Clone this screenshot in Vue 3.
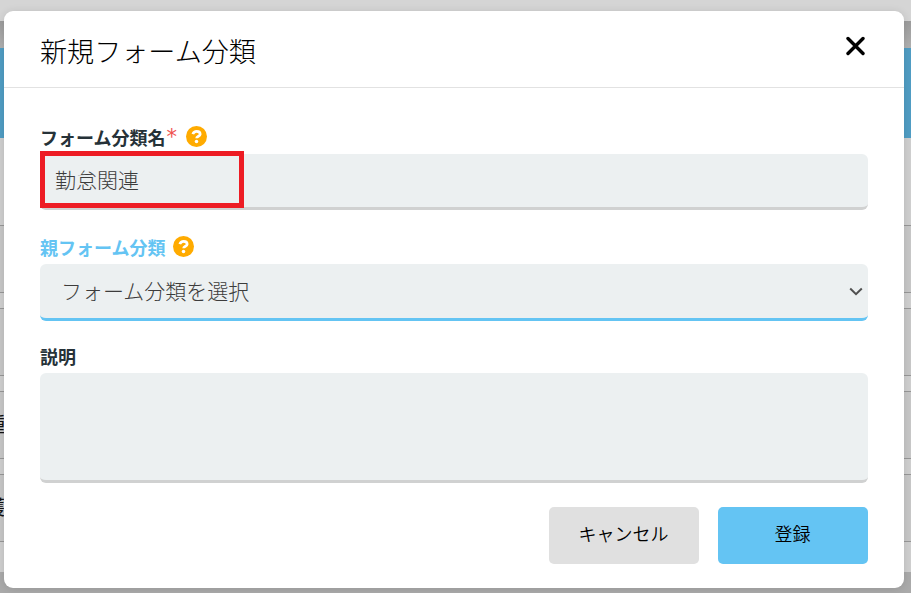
<template>
  <div class="screen">
    <div class="page" aria-hidden="true">
      <div class="page-top"></div>
      <div class="page-shade"></div>
      <div class="page-banner"></div>
      <div class="page-list">
        <div v-for="(row, index) in rows" :key="index" class="page-row">
          <span class="page-row-text">{{ row }}</span>
        </div>
      </div>
    </div>

    <div class="modal" role="dialog">
      <header class="modal-header">
        <h1 class="modal-title">新規フォーム分類</h1>
        <button class="close" type="button" aria-label="閉じる">
          <svg width="20" height="20" viewBox="0 0 20 20">
            <path d="M3 2.5 L18 17.5 M18 2.5 L3 17.5" />
          </svg>
        </button>
      </header>

      <form class="modal-body" @submit.prevent>
        <div v-for="field in fields" :key="field.id" class="field" :class="field.id">
          <div class="label-row">
            <span class="label">{{ field.label }}</span>
            <span v-if="field.required" class="required">*</span>
            <svg v-if="field.help" class="help" width="21" height="21" viewBox="0 0 512 512">
              <circle cx="256" cy="256" r="256" fill="#ffab00" />
              <path
                d="M166 197 C182 152 215 130 260 130 C312 130 346 160 346 200 C346 255 259 246 259 301"
                fill="none"
                stroke="#fff"
                stroke-width="66"
              />
              <circle cx="256" cy="376" r="43" fill="#fff" />
            </svg>
          </div>
          <div class="control">
            <span class="value">{{ field.text }}</span>
            <svg v-if="field.id === 'parent'" class="chevron" width="14" height="9" viewBox="0 0 14 9">
              <path d="M1.2 1.5 L7 7.2 L12.8 1.5" />
            </svg>
            <div v-if="field.id === 'name'" class="highlight"></div>
          </div>
        </div>

        <div class="actions">
          <button class="btn" type="button">キャンセル</button>
          <button class="btn primary" type="submit">登録</button>
        </div>
      </form>
    </div>
  </div>
</template>

<script setup>
const rows = ['', '', '種', '護']

const fields = [
  { id: 'name', label: 'フォーム分類名', required: true, help: true, text: '勤怠関連' },
  { id: 'parent', label: '親フォーム分類', required: false, help: true, text: 'フォーム分類を選択' },
  { id: 'description', label: '説明', required: false, help: false, text: '' }
]
</script>

<style>
body {
  margin: 0;
  overflow: hidden;
}
</style>

<style scoped>
.screen {
  position: relative;
  width: 911px;
  height: 593px;
  overflow: hidden;
  background: #aaa;
  font-family: 'Noto Sans CJK JP', 'Noto Sans', sans-serif;
}

.page-top {
  height: 21px;
  background: #d5d5d5;
}

.page-shade {
  height: 27px;
  background: linear-gradient(#9c9c9c, #b0b0b0);
}

.page-banner {
  height: 90px;
  background: #509dc4;
}

.page-list {
  display: flex;
  flex-direction: column;
  gap: 15px;
  box-sizing: border-box;
  height: 434px;
  padding-top: 87px;
  background: #cfcfcf;
}

.page-row {
  display: flex;
  align-items: center;
  box-sizing: border-box;
  height: 68px;
  flex: none;
  border: solid #979797;
  border-width: 1px 0;
  background: #c7c7c7;
}

.page-row-text {
  margin-left: -15px;
  padding-bottom: 3px;
  font-size: 20px;
  line-height: 20px;
  color: #111;
}

.modal {
  position: absolute;
  top: 11px;
  left: 4px;
  width: 900px;
  height: 577px;
  border-radius: 9px;
  background: #fff;
  box-shadow: 0 1px 8px rgba(0, 0, 0, 0.12);
}

.modal-header {
  display: flex;
  justify-content: space-between;
  box-sizing: border-box;
  height: 77px;
  padding: 20px 39px 0 36px;
  border-bottom: 1px solid #e2e2e2;
}

.modal-title {
  margin: 0;
  font-size: 27.1px;
  font-weight: 300;
  line-height: 40px;
  color: #000;
}

.close {
  width: 20px;
  height: 20px;
  margin-top: 5px;
  padding: 0;
  border: 0;
  background: none;
}

.close svg {
  display: block;
}

.close path {
  fill: none;
  stroke: #000;
  stroke-width: 3.4;
  stroke-linecap: round;
}

.modal-body {
  padding: 38px 36px 24px;
}

.field {
  margin-bottom: 24px;
}

.field.name {
  margin-bottom: 26px;
}

.label-row {
  display: flex;
  height: 28px;
}

.label {
  font-size: 18px;
  font-weight: 700;
  line-height: 22px;
  color: #263238;
}

.required {
  width: 11px;
  margin-left: 1px;
  font-family: 'DejaVu Sans', sans-serif;
  font-size: 21px;
  line-height: 23px;
  color: #ef5350;
}

.help {
  margin-left: 8px;
}

.required + .help {
  margin-left: 9px;
}

.control {
  position: relative;
  display: flex;
  align-items: center;
  justify-content: space-between;
  box-sizing: border-box;
  height: 56px;
  padding: 0 15px;
  border-bottom: 3px solid #d0d1d1;
  border-radius: 6px;
  background: #ecf0f1;
  font-size: 21px;
  font-weight: 300;
  color: #3c3c3c;
}

.value {
  padding-bottom: 3px;
}

.parent .label {
  color: #64c4f3;
}

.parent .control {
  height: 57px;
  padding: 0 5px 0 21px;
  border-bottom-color: #64c4f3;
}

.description .control {
  height: 110px;
}

.chevron {
  margin-top: 1px;
}

.chevron path {
  fill: none;
  stroke: #505050;
  stroke-width: 2;
}

.highlight {
  position: absolute;
  top: -3px;
  left: 0;
  box-sizing: border-box;
  width: 204px;
  height: 57px;
  border: 5px solid #ed1c24;
}

.actions {
  display: flex;
  justify-content: flex-end;
  gap: 19px;
}

.btn {
  width: 150px;
  height: 57px;
  padding: 0 1px 5px 0;
  border: 0;
  border-radius: 5px;
  background: #e0e0e0;
  font-family: inherit;
  font-size: 18px;
  font-weight: 350;
  color: #000;
}

.btn.primary {
  background: #64c4f3;
}
</style>
